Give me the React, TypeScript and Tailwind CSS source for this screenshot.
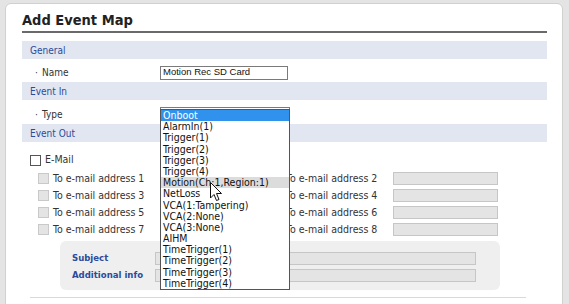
import React from "react";

const items = [
  "Onboot",
  "AlarmIn(1)",
  "Trigger(1)",
  "Trigger(2)",
  "Trigger(3)",
  "Trigger(4)",
  "Motion(Ch:1,Region:1)",
  "NetLoss",
  "VCA(1:Tampering)",
  "VCA(2:None)",
  "VCA(3:None)",
  "AIHM",
  "TimeTrigger(1)",
  "TimeTrigger(2)",
  "TimeTrigger(3)",
  "TimeTrigger(4)",
];

function Band({ label }: { label: string }) {
  return (
    <div className="h-[18px] bg-[#e1e6f0] pl-[8px] flex items-center text-[10px] text-[#2b4b9c]">
      {label}
    </div>
  );
}

function AddrCell({ n }: { n: number }) {
  return (
    <div className="flex items-center h-[17px]">
      <div className="w-[11px] h-[11px] border border-[#c9c9c9] bg-[#e4e4e4]" />
      <div className="ml-[4px] w-[107px] text-[10.5px] text-[#333] whitespace-nowrap">To e-mail address {n}</div>
      <div className="w-[105px] h-[13px] border border-[#c6c6c6] bg-[#e4e4e4]" />
    </div>
  );
}

export default function App() {
  return (
    <div
      className="w-[569px] h-[304px] overflow-hidden bg-[#e4e4e4] pt-[3px] pl-[5px] pr-[6px]"
      style={{ fontFamily: '"DejaVu Sans Condensed", "DejaVu Sans", sans-serif' }}
    >
      <div className="relative h-[330px] bg-white rounded-t-[6px] border border-[#d0d0d0] pl-[16px] pr-[15px]">
        <div className="h-[29px] border-b-2 border-[#6a6a6a] pt-[6px] text-[14.5px] leading-[20px] font-bold text-[#222]">
          Add Event Map
        </div>
        <div className="mt-[8px]">
          <Band label="General" />
          <div className="h-[23px] pt-[4px] flex items-center text-[10px] text-[#333]">
            <span className="ml-[13px] w-[7px]">·</span>
            <span className="w-[118px]">Name</span>
            <div
              className="w-[128px] h-[14px] border border-[#7a7a7a] bg-white flex items-center pl-[2px] text-[9.5px] text-[#111]"
              style={{ fontFamily: '"Liberation Sans", Arial, sans-serif' }}
            >
              Motion Rec SD Card
            </div>
          </div>
          <Band label="Event In" />
          <div className="h-[24px] pt-[4px] flex items-center text-[10px] text-[#333]">
            <span className="ml-[13px] w-[7px]">·</span>
            <span className="w-[118px]">Type</span>
            <div className="w-[130px] h-[14px] border border-[#7a7a7a] bg-white" />
          </div>
          <Band label="Event Out" />
        </div>
        <div className="mt-[12px] ml-[8px] h-[12px] flex items-center text-[10.5px] text-[#333]">
          <div className="w-[11px] h-[11px] border border-[#555] bg-white" />
          <span className="ml-[4px]">E-Mail</span>
        </div>
        <div className="mt-[4px] ml-[16px] grid grid-cols-[233px_233px]">
          {[1, 2, 3, 4, 5, 6, 7, 8].map((n) => (
            <AddrCell key={n} n={n} />
          ))}
        </div>
        <div className="mt-[3px] ml-[38px] w-[440px] h-[49px] rounded-[6px] bg-[#efefef] pt-[9px] pl-[12px]">
          {["Subject", "Additional info"].map((l) => (
            <div key={l} className="h-[17px] flex items-center">
              <span className="w-[83px] text-[9.5px] font-bold text-[#2b4b9c]">{l}</span>
              <div className="w-[321px] h-[13px] border border-[#c6c6c6] bg-[#e4e4e4]" />
            </div>
          ))}
        </div>
        <div className="mt-[7px] ml-[8px] w-[496px] h-px bg-[#d9d9d9]" />

        <div className="absolute left-[154px] top-[105px] w-[130px] border border-[#555] bg-white">
          {items.map((it, i) => (
            <div
              key={it}
              className={
                "h-[11.2px] leading-[11.2px] pl-[2px] text-[10.5px] whitespace-nowrap " +
                (i === 0 ? "bg-[#3092ec] text-white" : i === 6 ? "bg-[#dcdcdc] text-[#111]" : "text-[#111]")
              }
            >
              {it}
            </div>
          ))}
        </div>

        <svg
          className="absolute left-[204px] top-[178px]"
          width="13"
          height="20"
          viewBox="0 0 13 20"
        >
          <path
            d="M0.5 0.5 L0.5 16 L4 12.5 L6.5 18.5 L9 17.5 L6.5 11.5 L11.5 11.5 Z"
            fill="white"
            stroke="#111"
            strokeWidth="1"
            strokeLinejoin="round"
          />
        </svg>
      </div>
    </div>
  );
}
